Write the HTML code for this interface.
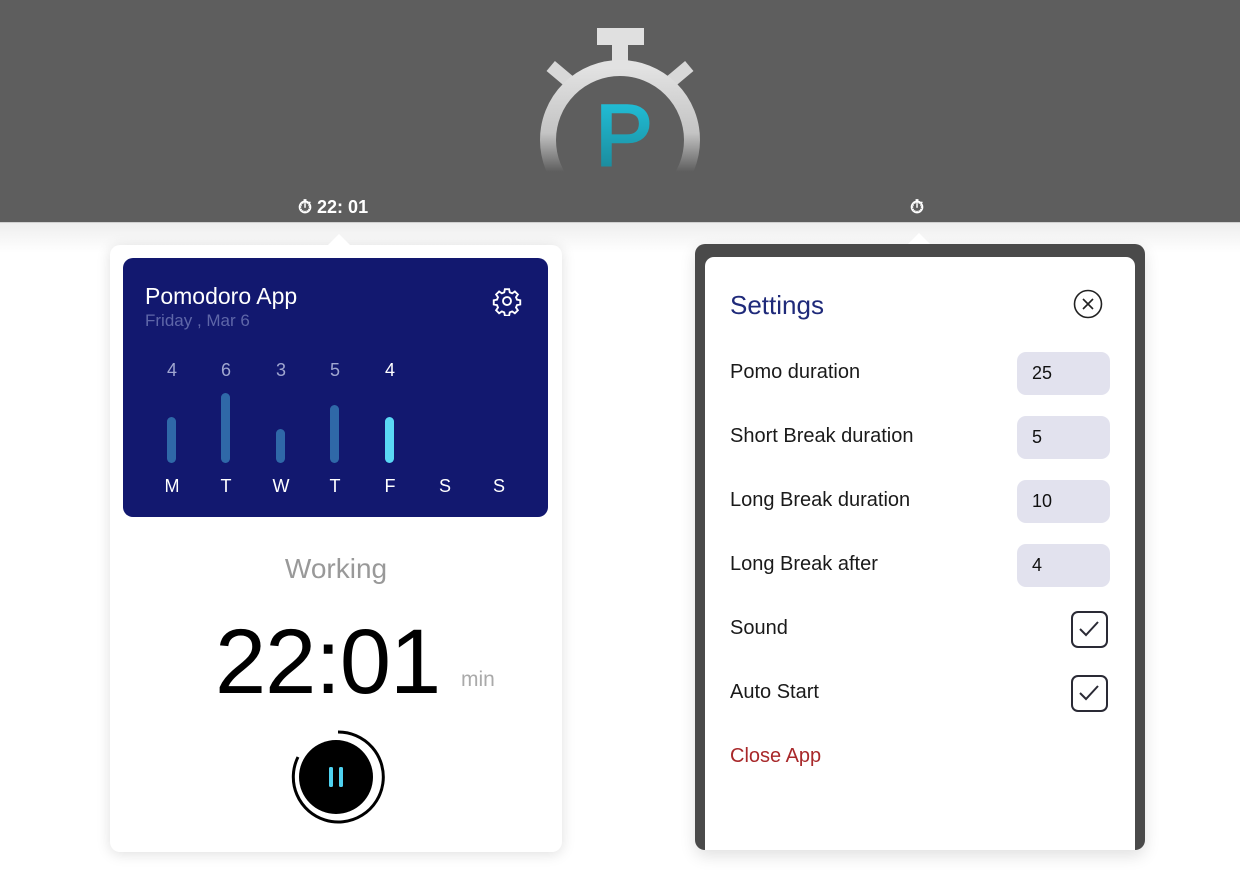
<!DOCTYPE html>
<html><head><meta charset="utf-8"><style>
*{margin:0;padding:0;box-sizing:border-box}
body{width:1240px;height:885px;background:#fff;position:relative;overflow:hidden;font-family:"Liberation Sans",sans-serif}
.a{position:absolute}
.lbl{position:absolute;left:730px;font-size:20px;color:#1a1a1a}
.inp{position:absolute;left:1017px;width:93px;height:43px;background:#e2e2ee;border-radius:9px;font-size:18px;color:#111;padding-left:15px;line-height:43px}
.chk{position:absolute;left:1071px;width:37px;height:37px;border:2.5px solid #2a2a35;border-radius:7px}
.num{position:absolute;top:360px;width:30px;text-align:center;font-size:18px;color:#a0a6d0}
.day{position:absolute;top:476px;width:30px;text-align:center;font-size:18px;color:#fff}
.bar{position:absolute;width:9px;border-radius:5px;background:#2f68a8;bottom:0}
</style></head><body>
<div class="a" style="left:0;top:0;width:1240px;height:222px;background:#5e5e5e"></div>
<div class="a" style="left:0;top:222px;width:1240px;height:1px;background:#d0d0d0"></div>
<div class="a" style="left:0;top:223px;width:1240px;height:30px;background:linear-gradient(#eee,#fff)"></div>
<svg class="a" style="left:520px;top:20px" width="200" height="180" viewBox="520 20 200 180">
<defs><linearGradient id="g" x1="0" y1="0" x2="0" y2="1"><stop offset="0" stop-color="#e2e2e2"/><stop offset="0.45" stop-color="#c4c4c4"/><stop offset="0.72" stop-color="#5e5e5e"/></linearGradient>
<linearGradient id="p" x1="0" y1="0" x2="0" y2="1"><stop offset="0" stop-color="#22c8e2"/><stop offset="1" stop-color="#1a8090"/></linearGradient></defs>
<rect x="597" y="28" width="47" height="17" fill="#e0e0e0"/>
<rect x="612" y="44" width="16" height="26" fill="#e0e0e0"/>
<rect x="548" y="68" width="26" height="13" fill="#d8d8d8" transform="rotate(40 561 74)"/>
<rect x="666" y="68" width="26" height="13" fill="#d8d8d8" transform="rotate(-40 679 74)"/>
<circle cx="620" cy="140" r="72" fill="none" stroke="url(#g)" stroke-width="16"/>
<text x="624" y="165" text-anchor="middle" font-size="86" font-family="Liberation Sans" fill="url(#p)" stroke="url(#p)" stroke-width="2.5">P</text>
</svg>
<div class="a" style="left:298px;top:197px;color:#fff;font-size:18px;font-weight:bold">⏱ 22: 01</div>
<div class="a" style="left:910px;top:197px;color:#fff;font-size:18px;font-weight:bold">⏱</div>
<!-- left card -->
<div class="a" style="left:110px;top:245px;width:452px;height:607px;background:#fff;border-radius:10px;box-shadow:0 2px 14px rgba(0,0,0,.13)"></div>
<div class="a" style="left:328px;top:234px;width:0;height:0;border-left:11px solid transparent;border-right:11px solid transparent;border-bottom:11px solid #fff"></div>
<div class="a" style="left:123px;top:258px;width:425px;height:259px;background:#12186f;border-radius:10px"></div>
<div class="a" style="left:145px;top:283px;color:#fff;font-size:23px">Pomodoro App</div>
<div class="a" style="left:145px;top:311px;color:#5e66a8;font-size:17px">Friday , Mar 6</div>
<svg class="a" style="left:492px;top:286px" width="30" height="30" viewBox="0 0 24 24" fill="none" stroke="#fff" stroke-width="1.5"><circle cx="12" cy="12" r="3.2"/><path d="M10.3 2.5h3.4l.5 2.6 1.9.8 2.2-1.5 2.4 2.4-1.5 2.2.8 1.9 2.6.5v3.4l-2.6.5-.8 1.9 1.5 2.2-2.4 2.4-2.2-1.5-1.9.8-.5 2.6h-3.4l-.5-2.6-1.9-.8-2.2 1.5-2.4-2.4 1.5-2.2-.8-1.9-2.6-.5v-3.4l2.6-.5.8-1.9-1.5-2.2 2.4-2.4 2.2 1.5 1.9-.8z"/></svg>
<div class="num" style="left:157px">4</div><div class="num" style="left:211px">6</div><div class="num" style="left:266px">3</div><div class="num" style="left:320px">5</div><div class="num" style="left:375px;color:#fff">4</div>
<div class="a" style="left:0;top:0;width:1px;height:463px">
<div class="bar" style="left:167px;height:46px"></div><div class="bar" style="left:221px;height:70px"></div><div class="bar" style="left:276px;height:34px"></div><div class="bar" style="left:330px;height:58px"></div><div class="bar" style="left:385px;height:46px;background:#5ad8f5"></div></div>
<div class="day" style="left:157px">M</div><div class="day" style="left:211px">T</div><div class="day" style="left:266px">W</div><div class="day" style="left:320px">T</div><div class="day" style="left:375px">F</div><div class="day" style="left:430px">S</div><div class="day" style="left:484px">S</div>
<div class="a" style="left:110px;top:553px;width:452px;text-align:center;color:#999;font-size:28px">Working</div>
<div class="a" style="left:215px;top:610px;font-size:92px;color:#000;letter-spacing:-1px">22:01</div>
<div class="a" style="left:461px;top:668px;font-size:21px;color:#aaa">min</div>
<svg class="a" style="left:286px;top:727px" width="100" height="100" viewBox="0 0 100 100">
<path d="M12 30 A45 45 0 1 0 52 5" fill="none" stroke="#000" stroke-width="3"/>
<circle cx="50" cy="50" r="37" fill="#000"/>
<rect x="43" y="40" width="4" height="20" rx="1.5" fill="#4fd2f0"/><rect x="53" y="40" width="4" height="20" rx="1.5" fill="#4fd2f0"/>
</svg>
<!-- right panel -->
<div class="a" style="left:695px;top:244px;width:450px;height:606px;background:#4a4a4a;border-radius:10px;box-shadow:0 6px 16px rgba(0,0,0,.12)"></div>
<div class="a" style="left:908px;top:233px;width:0;height:0;border-left:11px solid transparent;border-right:11px solid transparent;border-bottom:11px solid #fff"></div>
<div class="a" style="left:705px;top:257px;width:430px;height:593px;background:#fff;border-radius:9px 9px 0 0"></div>
<div class="a" style="left:730px;top:290px;font-size:26px;color:#1f2a7a">Settings</div>
<svg class="a" style="left:1073px;top:289px" width="30" height="30" viewBox="0 0 30 30" fill="none" stroke="#222" stroke-width="1.6"><circle cx="15" cy="15" r="13.5"/><path d="M10 10l10 10M20 10l-10 10"/></svg>
<div class="lbl" style="top:361px">Pomo duration</div><div class="inp" style="top:352px">25</div>
<div class="lbl" style="top:425px">Short Break duration</div><div class="inp" style="top:416px">5</div>
<div class="lbl" style="top:489px">Long Break duration</div><div class="inp" style="top:480px">10</div>
<div class="lbl" style="top:553px">Long Break after</div><div class="inp" style="top:544px">4</div>
<div class="lbl" style="top:617px">Sound</div>
<div class="chk" style="top:611px"><svg width="32" height="32" viewBox="0 0 32 32"><path d="M7 16l6 6 12-13" fill="none" stroke="#2a2a35" stroke-width="2"/></svg></div>
<div class="lbl" style="top:681px">Auto Start</div>
<div class="chk" style="top:675px"><svg width="32" height="32" viewBox="0 0 32 32"><path d="M7 16l6 6 12-13" fill="none" stroke="#2a2a35" stroke-width="2"/></svg></div>
<div class="lbl" style="top:745px;color:#a8282a">Close App</div>
</body></html>
